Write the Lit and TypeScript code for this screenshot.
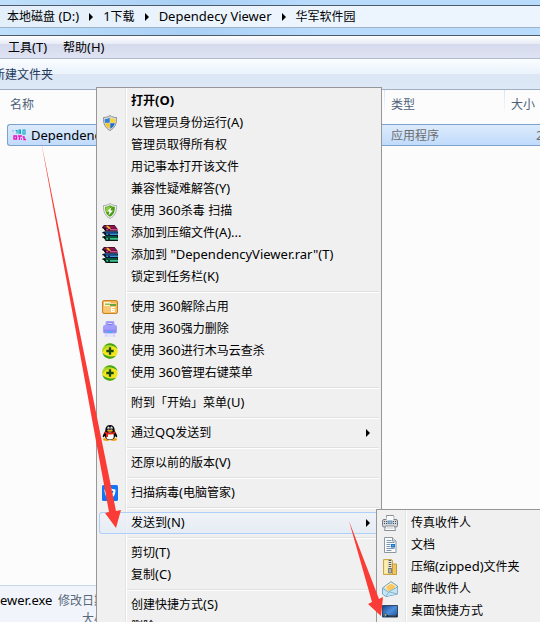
import { LitElement, html, css, svg, nothing, type TemplateResult } from "lit";
import { customElement } from "lit/decorators.js";

const icons: Record<string, TemplateResult> = {
  app: svg`<g fill="none" stroke="#12a7c4" stroke-width="1.1"><path d="M1 3.500v1M3.500 3.500h1.500v3M7 7V3h1.500v4M7 5h2M11 3v4h2V3z"/></g>
    <g fill="none" stroke="#f012be" stroke-width="1.4"><path d="M2 9h2.500v3H2zM6 9h4M7.500 9v4M10.500 10h1.500v2.500h2M9 12h1"/></g>`,
  uac: svg`<path d="M8 .5c2 1.500 4 2 6.500 2 .3 6-1.500 10.500-6.500 13C3 13 1.200 8.500 1.500 2.500 4 2.500 6 2 8 .5z" fill="#d8dadc" stroke="#8b8f94"/>
    <path d="M7.700 2.500v5.300H3c-.3-1.300-.3-2.500-.2-3.800 2 0 3.500-.5 4.900-1.500z" fill="#2f7fd6"/><path d="M8.300 2.500v5.300H13c.3-1.300.3-2.500.2-3.800-2 0-3.500-.5-4.900-1.500z" fill="#f9d52e"/>
    <path d="M3.200 8.300h4.500v5.500c-2.500-1.300-3.800-3-4.500-5.500z" fill="#f7c81c"/><path d="M12.800 8.300H8.300v5.500c2.500-1.300 3.800-3 4.500-5.500z" fill="#1f6cc9"/>`,
  guard: svg`<path d="M8 .5c2 1.500 4 2 6.500 2 .3 6-1.500 10.500-6.500 13C3 13 1.200 8.500 1.500 2.500 4 2.500 6 2 8 .5z" fill="#eceeec" stroke="#a9adaa"/>
    <path d="M8 2.300c1.500 1 3 1.500 4.800 1.500.2 4.500-1 8-4.800 10-3.800-2-5-5.500-4.800-10 1.800 0 3.300-.5 4.800-1.500z" fill="#4b9d12"/>
    <path d="M8 3c-1.200.8-2.500 1.300-4.200 1.400-.1 2 .1 3.500.7 5L8 7z" fill="#8ccb3a"/><path d="M9.500 4L5 8.500h2.500L6.500 12.500 11 7.500H8.500z" fill="#fff"/>`,
  rar: svg`<path d="M0 2.500L3 6.500h12.500V4L12.500 0H2z" fill="#14060f"/><path d="M1.200 1.500L2.500.5h9.700L15 3.800H4z" fill="#8f1552"/><path d="M4 4h12v1.500H4.500z" fill="#d0529c"/><path d="M4 .8h2L9 3.800H6.500z" fill="#f0cf1c"/><path d="M6 4h2v2H6z" fill="#5c0b33"/>
    <path d="M1 3.300l2.300 2.900v1L1 4.800z" fill="#fff"/>
    <path d="M0 7.500l3.500 4H16V6.500H2z" fill="#0a1526"/><path d="M2.500 6.800H15l.5 1.400H4z" fill="#12498f"/><path d="M4 8.500h12V10H4.500z" fill="#3f95dc"/><path d="M6 8.500h2v2H6z" fill="#0b2950"/><path d="M1 8l2.300 2.700v1L1 9.500z" fill="#fff"/>
    <path d="M0 12l3.500 4H16v-5H2z" fill="#06180f"/><path d="M2.500 11.300H15l.5 1.400H4z" fill="#0b6b50"/><path d="M4 13h12v1.700H4.500z" fill="#3cbf8d"/><path d="M6 13h2v2H6z" fill="#06402d"/><path d="M1 12.500l2.300 2.600v.9L1 14z" fill="#fff"/>`,
  folder: svg`<rect x=".5" y="1.500" width="15" height="13" rx="1.500" fill="#f2b655" stroke="#c98427"/><path d="M2 3h6l1 1.500h5V7H2z" fill="#fff4d8"/>
    <path d="M3 4.500h5V6H3z" fill="#8fbb52"/><path d="M8 5h6v2H8z" fill="#64a83b"/><path d="M1.500 7h13v6.500h-13z" fill="#f7c873"/>
    <path d="M12.500 8.500H9.500v4h2.500v-2H9.500" fill="none" stroke="#fff" stroke-width="1.200"/>`,
  shredder: svg`<path d="M4 0h8l1 5H3z" fill="#a9a4fb"/><path d="M5.500 1.500h5v3h-5z" fill="#8079ee"/><path d="M6 2.500h4" stroke="#d8d5ff"/>
    <rect x="1" y="4" width="14" height="8.500" rx="2" fill="#a39dfa"/><path d="M2 8.500h12v3H2z" fill="#8f87f4"/><rect x="5.500" y="10.500" width="5" height="1.500" rx=".7" fill="#35b6ee"/>
    <path d="M3 13h10l1 3H2z" fill="#e6e4fb"/><path d="M4 13.500v2M12 13.500v2" stroke="#c4c0f8"/>`,
  plus: svg`<circle cx="8" cy="8" r="7.700" fill="#f4e61c"/><path d="M2 3.200A7.700 7.700 0 0 1 15.500 6C12 2.500 7 2 2 3.200zM14 12.800A7.700 7.700 0 0 1 .5 10c3.500 3.500 8.500 4 13.500 2.800z" fill="#3fa422"/>
    <path d="M.5 10A7.700 7.700 0 0 1 2 3.200c3-1.500 7-1 9 0C6 3.500 1.500 6 .5 10z" fill="#a6d526"/><path d="M8 4.300v7.400M4.300 8h7.400" stroke="#164a10" stroke-width="2.300"/>`,
  qq: svg`<ellipse cx="4.500" cy="14.500" rx="3.500" ry="1.400" fill="#f2a013"/><ellipse cx="11.500" cy="14.500" rx="3.500" ry="1.400" fill="#f2a013"/>
    <path d="M8 0c3 0 4.700 2 4.700 5 0 1 .3 1.800 1.200 3 1 1.500 1.800 3.500 1 4.300-.6.300-1-.5-1.500-1.200C12.700 13.500 11 15 8 15s-4.700-1.500-5.400-3.900C2.100 11.800 1.700 12.600 1.100 12.300c-.8-.8 0-2.800 1-4.300.9-1.200 1.200-2 1.200-3C3.300 2 5 0 8 0z" fill="#0b0b0b"/>
    <ellipse cx="8" cy="11" rx="3.800" ry="3.500" fill="#fff"/><ellipse cx="6.500" cy="3" rx="1.100" ry="1.500" fill="#fff"/><ellipse cx="9.500" cy="3" rx="1.100" ry="1.500" fill="#fff"/><circle cx="6.800" cy="3.200" r=".5"/><circle cx="9.200" cy="3.200" r=".5"/>
    <ellipse cx="8" cy="5.700" rx="3" ry="1" fill="#f3a51a"/><path d="M2.800 6.500c3.500 1.800 7 1.800 10.400 0l.5 1.500c-3 1.500-5.500 1.700-7.700 1.400V12H4V8.800c-.7-.2-1.200-.5-1.700-.8z" fill="#e3231b"/>`,
  manager: svg`<rect width="16" height="16" rx="1.500" fill="#1673f5"/><path d="M2.500 4.500c2.500 0 4-.7 5.500-1.700 1.500 1 3 1.700 5.500 1.700 0 5-1.500 7.500-5.500 9.500-4-2-5.500-4.500-5.500-9.500z" fill="#fff"/><path d="M5 7l2.500 4L11 6" fill="none" stroke="#1673f5" stroke-width="1.500"/>`,
  fax: svg`<path d="M4.500.5h7v6h-7z" fill="#fff" stroke="#8b8f96"/><path d="M11 1h1.500v4H11z" fill="#b9bdc4"/><rect x=".5" y="4.500" width="15" height="7.500" rx="1.500" fill="#d3d7dc" stroke="#777c84"/>
    <path d="M4.500 2h7v3.500h-7z" fill="#f8f9fa"/><rect x="6" y="6" width="4" height="2.500" fill="#8fc3e6" stroke="#456b8b" stroke-width=".6"/><path d="M2 6.500h3M2 8.500h3M11 6.500h3M11 8.500h3" stroke="#4b5058" stroke-dasharray="1 1"/>
    <path d="M3.500 11h9l1 4.500h-11z" fill="#fdfdfd" stroke="#8b8f96"/><path d="M4.500 13h7" stroke="#c4c7cc"/>`,
  doc: svg`<path d="M2.500.5h8l3.500 3.500v11.500H2.500z" fill="#fafcfd" stroke="#8e979f"/><path d="M10.500.5V4H14" fill="#dbe5ec" stroke="#8e979f"/>
    <path d="M4.500 3.500h5M4.500 5.500h8M4.500 7.500h4M4.500 9.500h4M4.500 11.500h8M4.500 13.500h5" stroke="#7f97ad"/><path d="M9 7h4v3.500H9z" fill="#1976c8"/><path d="M10 8h2v1h-2z" fill="#53b5e8"/>`,
  zip: svg`<path d="M1.500.5h8l1 1v14h-9z" fill="#f7dd85" stroke="#c9a649"/><path d="M10.500 5h4v10.500h-4z" fill="#edc75d" stroke="#c29c3e"/><path d="M2.500 1.500h3v13h-3z" fill="#fdf0b7"/>
    <path d="M6.500 1h3v9h-3z" fill="#e8e8e8"/><path d="M8 1v9" stroke="#50555a" stroke-width="2.500" stroke-dasharray="1 1"/><path d="M6.500 9.500h3V14h-3z" fill="#aeb3b8" stroke="#60656a" stroke-width=".7"/>`,
  mail: svg`<path d="M.5 7L9 .7l6.500 4.300v8l-11.500 2.500L.5 13z" fill="#b6d9ec" stroke="#6b9cba"/><path d="M2.500 6L9 1.500l5.500 3.500L13 9l-7 2z" fill="#fff3c4"/><path d="M4 6l5-3.500 4.500 2.800L12 8.500l-6 1.500z" fill="#f9c860"/>
    <path d="M.8 7.500L6 11l9.300-5v7L4 15.300.8 12.800z" fill="#c3e4f5"/><path d="M.8 7.500L6.500 11l8.800-5M4 15.300l3-4.500 8 2.200" fill="none" stroke="#75a9c7" stroke-width=".8"/>`,
  desktop: svg`<defs><linearGradient id="screen" x1="0" y1="0" x2="1" y2="1"><stop stop-color="#123f8c"/><stop offset=".5" stop-color="#4f8edc"/><stop offset="1" stop-color="#174f9e"/></linearGradient></defs>
    <path d="M.5 2.500h15v11.500H.5z" fill="url(#screen)" stroke="#33475f"/><path d="M1 12h14v2H1z" fill="#18263a"/><path d="M6 12.800h8" stroke="#60748c" stroke-width=".8"/><circle cx="3" cy="11.800" r="2.300" fill="#1c66b5"/><path d="M1.500 11.700l1.500-1.500v1.500z" fill="#e95a29"/><path d="M3 10.200l1.500 1.500H3z" fill="#8cc63f"/><path d="M3 11.800h1.500L3 13.300z" fill="#f5d02a"/>`,
};

const icon = (name?: string) =>
  html`<svg class="icon" viewBox="0 0 16 16" aria-hidden="true">${name ? icons[name] : nothing}</svg>`;

/* Latin runs are set one pixel larger than the ideographs beside them. */
const mixed = (text: string) =>
  text.split(/([\x20-\x7e]+)/).filter(Boolean)
    .map((run) => (/^[\x20-\x7e]/.test(run) ? html`<span class="latin">${run}</span>` : run));

const sharedText = css`
  .latin { font-family: "Noto Sans", "Open Sans", sans-serif; font-size: 13px; }
  .icon { width: 16px; height: 16px; flex: none; display: block; }
  button { font: inherit; color: inherit; margin: 0; border: 0; padding: 0; background: none; text-align: left; white-space: pre; }
`;

interface MenuItem { label: string; icon?: string; more?: boolean; bold?: boolean; active?: boolean; }

const mainMenu: MenuItem[][] = [
  [
    { label: "打开(O)", bold: true },
    { label: "以管理员身份运行(A)", icon: "uac" },
    { label: "管理员取得所有权" },
    { label: "用记事本打开该文件" },
    { label: "兼容性疑难解答(Y)" },
    { label: "使用 360杀毒 扫描", icon: "guard" },
    { label: "添加到压缩文件(A)...", icon: "rar" },
    { label: '添加到 "DependencyViewer.rar"(T)', icon: "rar" },
    { label: "锁定到任务栏(K)" },
  ],
  [
    { label: "使用 360解除占用", icon: "folder" },
    { label: "使用 360强力删除", icon: "shredder" },
    { label: "使用 360进行木马云查杀", icon: "plus" },
    { label: "使用 360管理右键菜单", icon: "plus" },
  ],
  [{ label: "附到「开始」菜单(U)" }],
  [{ label: "通过QQ发送到", icon: "qq", more: true }],
  [{ label: "还原以前的版本(V)" }],
  [{ label: "扫描病毒(电脑管家)", icon: "manager" }],
  [{ label: "发送到(N)", more: true, active: true }],
  [{ label: "剪切(T)" }, { label: "复制(C)" }],
  [{ label: "创建快捷方式(S)" }, { label: "删除(D)" }],
];

const sendToMenu: MenuItem[][] = [
  [
    { label: "传真收件人", icon: "fax" },
    { label: "文档", icon: "doc" },
    { label: "压缩(zipped)文件夹", icon: "zip" },
    { label: "邮件收件人", icon: "mail" },
    { label: "桌面快捷方式", icon: "desktop" },
  ],
];

@customElement("context-menu")
class ContextMenu extends LitElement {
  static properties = { groups: { attribute: false } };
  declare groups: MenuItem[][];

  static styles = [sharedText, css`
    :host {
      display: block; box-sizing: border-box; padding: 2px; color: #000;
      border: 1px solid #979797;
      background: linear-gradient(90deg, #f0f0f0 28px, #e2e3e3 28px 29px, #fff 29px 30px, #f0f0f0 30px);
    }
    .item {
      box-sizing: border-box; width: 100%; height: 22px; display: flex; align-items: center;
      gap: 13px; padding: 0 9px 0 3px; border-radius: 3px;
    }
    .label { flex: 1; padding-bottom: 2px; }
    .bold { font-weight: bold; }
    .active { box-shadow: inset 0 0 0 1px #aecff7; background: linear-gradient(#f0f3f8cc, #e3ebf6cc); }
    .more { width: 4px; height: 8px; fill: #000; }
    hr { height: 1px; margin: 3px 0 3px 28px; border: 0; border-top: 1px solid #e0e0e0; background: #fff; }
  `];

  render() {
    return this.groups.map((group, index) => html`
      ${index ? html`<hr />` : nothing}
      ${group.map((item) => html`
        <button class="item ${item.active ? "active" : ""} ${item.bold ? "bold" : ""}" role="menuitem">
          ${icon(item.icon)}<span class="label">${mixed(item.label)}</span>
          ${item.more ? html`<svg class="more" viewBox="0 0 4 8"><path d="M0 0l4 4-4 4z" /></svg>` : nothing}
        </button>`)}
    `);
  }
}

@customElement("app-root")
class AppRoot extends LitElement {
  static styles = [sharedText, css`
    :host {
      display: flex; flex-direction: column; position: relative; height: 100vh; overflow: hidden;
      background: #fcfcfc; color: #000; font: 12px/20px "Noto Sans CJK SC", sans-serif; white-space: nowrap;
    }
    .glass { padding: 5px 0 7px; background: linear-gradient(90deg, #bfe0fb, #a9d0f5 35%, #b9dcfc 60%); }
    .address {
      display: flex; align-items: center; gap: 9px; height: 21px; padding-left: 7px;
      border-top: 1px solid #4c5a6c; border-bottom: 1px solid #9fb2c6;
      background: linear-gradient(90deg, #e3effb, #ecf5fe 40%);
    }
    .address button { padding-bottom: 2px; }
    .crumb { width: 4px; height: 8px; margin: 0 1px; }
    .menubar {
      display: flex; gap: 16px; height: 22px; padding-left: 8px;
      border-top: 1px solid #4c5a6c; border-bottom: 1px solid #b3bace;
      background: linear-gradient(#fff, #e6ebf5 8px, #d5daec 8px, #dfe3f3);
    }
    .toolbar {
      display: flex; height: 30px; color: #1e395b; border-bottom: 1px solid #a0afc3;
      background: linear-gradient(#fafdff, #eaf2fb 15px, #dce6f4 15px, #dde9f7);
    }
    .newfolder { width: 53px; display: flex; justify-content: flex-end; align-items: center; }
    .files { flex: 1; padding-left: 7px; overflow: hidden; }
    table { width: 100%; table-layout: fixed; border-spacing: 0; }
    .name { width: 377px; }
    .type { width: 120px; }
    th {
      box-sizing: border-box; height: 34px; padding: 0 0 6px 7px; text-align: left; font-weight: normal; color: #4c607a;
      background: linear-gradient(#d5e6f7, #fcfcfc) left top / 1px 25px no-repeat;
    }
    th:first-child { padding-left: 3px; background: none; }
    td {
      box-sizing: border-box; height: 22px; padding: 0 0 0 7px; color: #6d6d6d;
      border: solid #7da2ce; border-width: 1px 0; background: linear-gradient(#dcebfc, #c1dbfc);
    }
    td:first-child { padding-left: 4px; color: #000; border-left-width: 1px; border-radius: 3px 0 0 3px; }
    td:last-child { padding-left: 32px; }
    .file { display: flex; align-items: center; gap: 3px; height: 20px; }
    .details {
      display: grid; grid-template-columns: 52px 1fr; column-gap: 6px; grid-auto-rows: 18px; height: 31px;
      padding-top: 5px; line-height: 18px; border-top: 1px solid #c9d7ee; background: #f1f5fb; color: #5a6779;
    }
    .filename { color: #000; text-align: right; }
    .size { padding-left: 24px; }
    .main { position: absolute; left: 96px; top: 87px; width: 286px; }
    .send { position: absolute; left: 376px; top: 509px; width: 200px; }
    .arrows { position: absolute; left: 0; top: 0; width: 540px; height: 622px; fill: #fb3b35; pointer-events: none; }
  `];

  render() {
    const crumb = html`<svg class="crumb" viewBox="0 0 4 8"><path d="M0 0l4 4-4 4z" /></svg>`;
    return html`
      <div class="glass">
        <nav class="address">
          ${["本地磁盘 (D:)", "1下载", "Dependecy Viewer", "华军软件园"].map((part, index) =>
            html`${index ? crumb : nothing}<button>${mixed(part)}</button>`)}
        </nav>
      </div>
      <div class="menubar"><button>${mixed("工具(T)")}</button><button>${mixed("帮助(H)")}</button></div>
      <div class="toolbar"><button class="newfolder">新建文件夹</button></div>
      <main class="files">
        <table>
          <thead><tr><th class="name">名称</th><th class="type">类型</th><th>大小</th></tr></thead>
          <tbody><tr>
            <td><div class="file">${icon("app")}<span class="latin">DependencyViewer</span></div></td>
            <td>应用程序</td><td>${mixed("2")}</td>
          </tr></tbody>
        </table>
      </main>
      <footer class="details">
        <span class="filename latin">ewer.exe</span><span>修改日期</span><span></span><span class="size">大小</span>
      </footer>
      <context-menu class="main" role="menu" .groups=${mainMenu}></context-menu>
      <context-menu class="send" role="menu" .groups=${sendToMenu}></context-menu>
      <svg class="arrows" viewBox="0 0 540 622" aria-hidden="true">
        <path d="M41 141L116 511L121 510L116 528L105 513L109 512Z" />
        <path d="M349 521L379 599L383 597L381 616L368 604L372 602Z" />
      </svg>
    `;
  }
}
